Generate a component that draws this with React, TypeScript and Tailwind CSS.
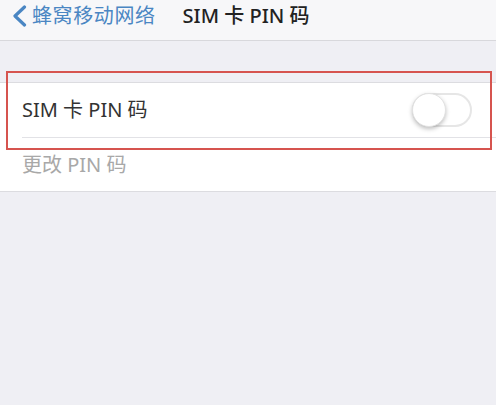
import React from 'react';

const font = { fontFamily: '"Noto Sans", "Noto Sans CJK SC", sans-serif' };

function Toggle() {
  return (
    <div className="relative h-[34px] w-[60px] rounded-full border-2 border-[#e6e6e6] bg-white">
      <div className="absolute left-[-2px] top-[-2px] h-[34px] w-[34px] rounded-full bg-white shadow-[0_2px_4px_rgba(0,0,0,0.25)] border border-[#e2e2e2]" />
    </div>
  );
}

export default function App() {
  return (
    <div className="relative h-[405px] w-[496px] overflow-hidden bg-[#efeff4]" style={font}>
      {/* nav bar */}
      <div className="flex h-[41px] items-center border-b border-[#d8d8dc] bg-[#f7f7f9] pb-[9px]">
        <div className="flex items-center pl-[12px] text-[#4a86c3]">
          <svg width="15" height="22" viewBox="0 0 15 22" fill="none">
            <path d="M12.5 2 L3 11 L12.5 20" stroke="currentColor" strokeWidth="3.2" strokeLinecap="round" strokeLinejoin="round" />
          </svg>
          <span className="ml-[5px] text-[20px] leading-none tracking-[0.6px]">蜂窝移动网络</span>
        </div>
        <span className="ml-[27px] text-[20px] font-medium leading-none text-[#222]">SIM 卡 PIN 码</span>
      </div>

      <div className="mt-[41px] border-y border-[#dcdce0] bg-white">
        <div className="flex h-[54px] items-center justify-between pl-[22px] pr-[24px]">
          <span className="text-[20px] text-[#333]">SIM 卡 PIN 码</span>
          <Toggle />
        </div>
        <div className="ml-[22px] h-px bg-[#e2e2e6]" />
        <div className="flex h-[53px] items-center pl-[22px]">
          <span className="text-[20px] text-[#a8a8a8]">更改 PIN 码</span>
        </div>
      </div>

      {/* red highlight */}
      <div className="absolute left-[6px] top-[71px] h-[79px] w-[486px] border-2 border-[#d6544f]" />
    </div>
  );
}
